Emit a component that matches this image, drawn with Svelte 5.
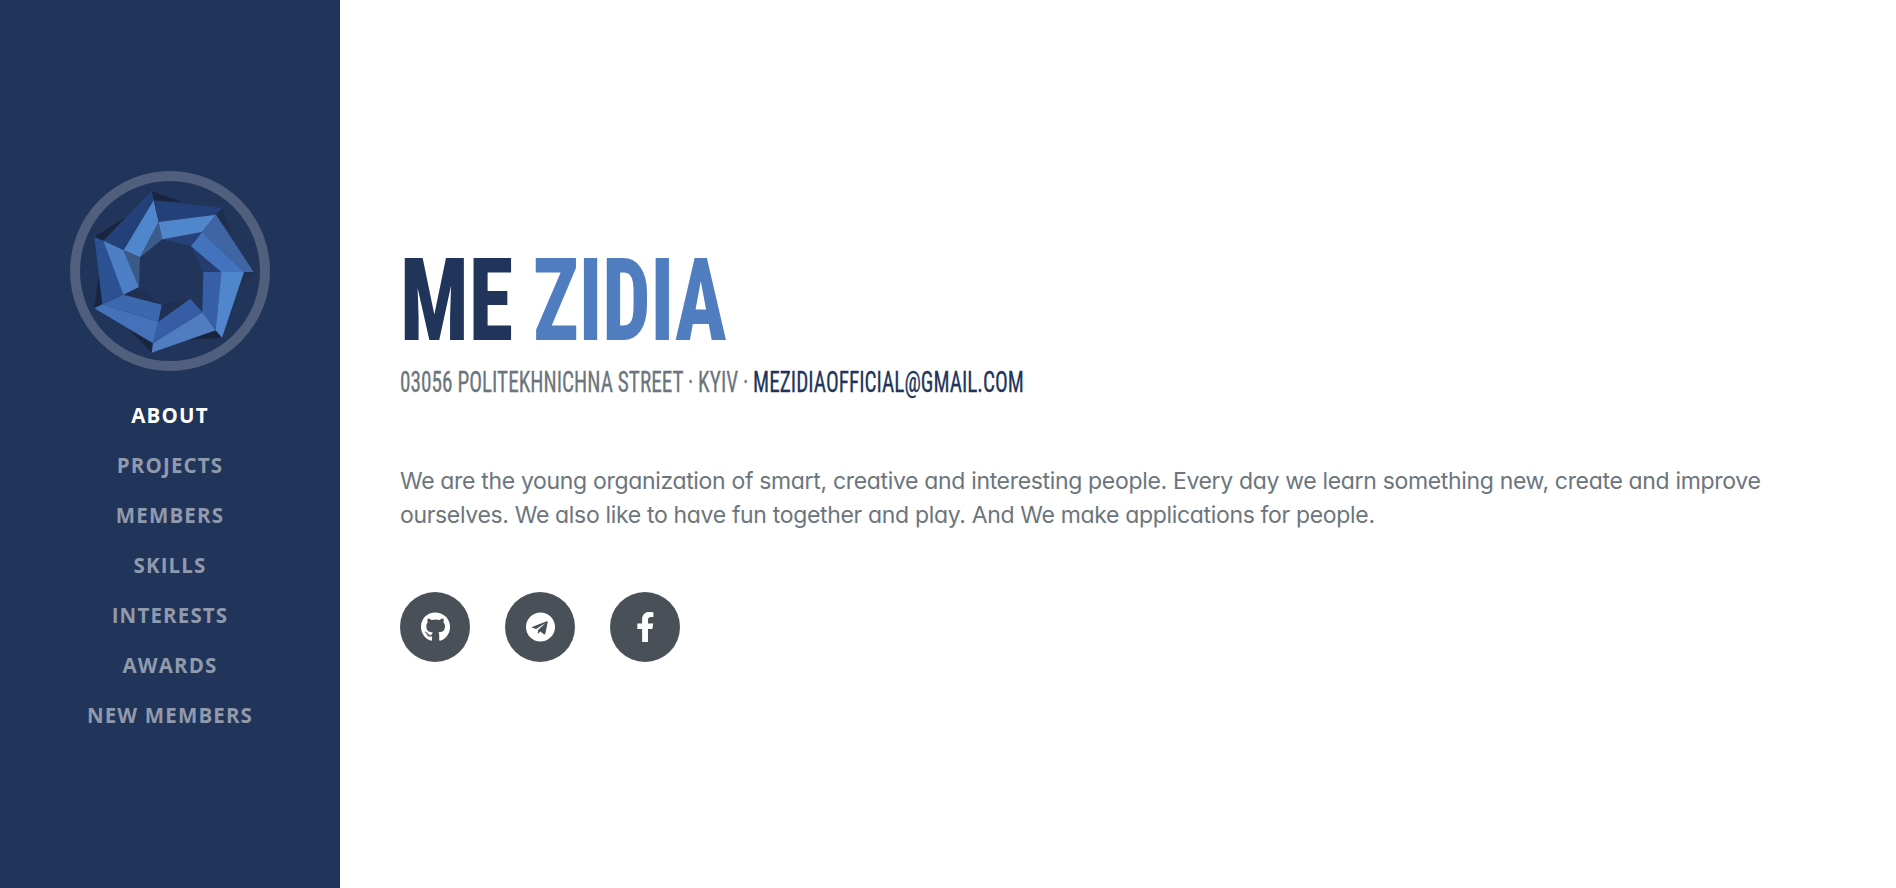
<script>
  const nav = ['About', 'Projects', 'Members', 'Skills', 'Interests', 'Awards', 'New Members'];
  const active = 'About';

  const facets = [
    // shadows
    ['#19253f', '275,93 365,126 281,123'],
    ['#1e2d4e', '487,143 515,222 468,164'],
    ['#19253f', '103,231 197,172 130,243'],
    ['#19253f', '116,345 103,445 129,433'],
    ['#19253f', '207,508 281,549 275,578'],
    ['#19253f', '486,533 373,541 467,510'],
    ['#203050', '552,336 581,336 538,385'],
    // inner shadows
    ['#27417a', '307,238 426,216 393,259'],
    ['#253c70', '393,259 484,336 430,336'],
    ['#212f52', '305,434 391,416 295,485'],
    ['#212f52', '190,404 237,381 305,434'],
    // ring segments
    ['#244079', '275,93 281,121 191,271 130,242'],
    ['#5086cc', '281,121 296,186 240,292 191,271'],
    ['#3c5d8c', '296,186 307,238 240,292'],
    ['#244079', '281,121 487,143 468,164 296,186'],
    ['#5086cc', '296,186 468,164 426,216 307,238'],
    ['#3f65a2', '468,164 581,336 552,336 426,216'],
    ['#4473bd', '426,216 552,336 484,336 393,259'],
    ['#375fa8', '430,336 484,336 467,511 427,457'],
    ['#5086cc', '484,336 552,336 486,533 467,511'],
    ['#365da5', '391,416 427,457 279,550 295,485'],
    ['#4f7dc0', '427,457 467,511 275,578 279,550'],
    ['#3c68b0', '190,404 305,434 295,485 127,433'],
    ['#4471ba', '127,433 295,485 279,550 103,445'],
    ['#2c5192', '103,231 130,242 190,404 127,433'],
    ['#4c7fc6', '130,242 191,271 237,381 190,404'],
    ['#3b5a88', '191,271 240,292 237,381']
  ];

  const social = [
    {
      name: 'GitHub',
      box: '0 0 496 512',
      d: 'M165.9 397.4c0 2-2.3 3.6-5.2 3.6-3.3.3-5.6-1.3-5.6-3.6 0-2 2.3-3.6 5.2-3.6 3-.3 5.6 1.3 5.6 3.6zm-31.1-4.5c-.7 2 1.3 4.3 4.3 4.9 2.6 1 5.6 0 6.2-2s-1.3-4.3-4.3-5.2c-2.6-.7-5.5.3-6.2 2.3zm44.2-1.7c-2.9.7-4.9 2.6-4.6 4.9.3 2 2.9 3.3 5.9 2.6 2.9-.7 4.9-2.6 4.6-4.6-.3-1.9-3-3.2-5.9-2.9zM244.8 8C106.1 8 0 113.3 0 252c0 110.9 69.8 205.8 169.5 239.2 12.8 2.3 17.3-5.6 17.3-12.1 0-6.2-.3-40.4-.3-61.4 0 0-70 15-84.7-29.8 0 0-11.4-29.1-27.8-36.6 0 0-22.9-15.7 1.6-15.4 0 0 24.9 2 38.6 25.8 21.9 38.6 58.6 27.5 72.9 20.9 2.3-16 8.8-27.1 16-33.7-55.9-6.2-112.3-14.3-112.3-110.5 0-27.5 7.6-41.3 23.6-58.9-2.6-6.5-11.1-33.3 2.6-67.9 20.9-6.5 69 27 69 27 20-5.6 41.5-8.5 62.8-8.5s42.8 2.9 62.8 8.5c0 0 48.1-33.6 69-27 13.7 34.7 5.2 61.4 2.6 67.9 16 17.7 25.8 31.5 25.8 58.9 0 96.5-58.9 104.2-114.8 110.5 9.2 7.9 17 22.9 17 46.4 0 33.7-.3 75.4-.3 83.6 0 6.5 4.6 14.4 17.3 12.1C428.2 457.8 496 362.9 496 252 496 113.3 383.5 8 244.8 8zM97.2 352.9c-1.3 1-1 3.3.7 5.2 1.6 1.6 3.9 2.3 5.2 1 1.3-1 1-3.3-.7-5.2-1.6-1.6-3.9-2.3-5.2-1zm-10.8-8.1c-.7 1.3.3 2.9 2.3 3.9 1.6 1 3.6.7 4.3-.7.7-1.3-.3-2.9-2.3-3.9-2-.6-3.6-.3-4.3.7zm32.4 35.6c-1.6 1.3-1 4.3 1.3 6.2 2.3 2.3 5.2 2.6 6.5 1 1.3-1.3.7-4.3-1.3-6.2-2.2-2.3-5.2-2.6-6.5-1zm-11.4-14.7c-1.6 1-1.6 3.6 0 5.9 1.6 2.3 4.3 3.3 5.6 2.3 1.6-1.3 1.6-3.9 0-6.2-1.4-2.3-4-3.3-5.6-2z'
    },
    {
      name: 'Telegram',
      box: '0 0 496 512',
      d: 'M248 8C111 8 0 119 0 256s111 248 248 248 248-111 248-248S385 8 248 8zm121.8 169.9l-40.7 191.8c-3 13.6-11.1 16.9-22.4 10.5l-62-45.7-29.9 28.8c-3.3 3.3-6.1 6.1-12.5 6.1l4.4-63.1 114.9-103.8c5-4.4-1.1-6.9-7.7-2.5l-142 89.4-61.2-19.1c-13.3-4.2-13.6-13.3 2.8-19.7l239.1-92.2c11.1-4 20.8 2.7 17.2 19.5z'
    },
    {
      name: 'Facebook',
      box: '0 0 320 512',
      d: 'M279.14 288l14.22-92.66h-88.91v-60.13c0-25.35 12.42-50.06 52.24-50.06h40.42V6.26S260.43 0 225.36 0c-73.22 0-121.08 44.38-121.08 124.72v70.62H22.89V288h81.39v224h100.17V288z'
    }
  ];
</script>

<div class="page">
  <aside>
    <svg class="avatar" viewBox="30 33 600 600" aria-hidden="true">
      {#each facets as [fill, points]}
        <polygon {points} {fill} />
      {/each}
      <circle cx="330" cy="333" r="285" fill="none" stroke="#505f7d" stroke-width="30" />
    </svg>
    <nav>
      {#each nav as item}
        <a href="#top" class:active={item === active}>{item}</a>
      {/each}
    </nav>
  </aside>

  <main>
    <h1><span class="first">Me</span><span class="last">Zidia</span></h1>
    <p class="contact">
      03056 Politekhnichna Street · Kyiv · <a href="#top">mezidiaofficial@gmail.com</a>
    </p>
    <p class="lead">
      We are the young organization of smart, creative and interesting people. Every day we learn something new,
      create and improve ourselves. We also like to have fun together and play. And We make applications for people.
    </p>
    <div class="social">
      {#each social as s}
        <a href="#top" aria-label={s.name}>
          <svg viewBox={s.box} height="30" fill="#fff"><path d={s.d} /></svg>
        </a>
      {/each}
    </div>
  </main>
</div>

<style>
  :global(body) {
    background: #fff;
  }
  .page {
    display: flex;
    height: 888px;
    overflow: hidden;
  }
  a {
    text-decoration: none;
  }
  aside {
    box-sizing: border-box;
    flex: 0 0 340px;
    display: flex;
    flex-direction: column;
    align-items: center;
    justify-content: center;
    padding-top: 24px;
    background: #21355a;
  }
  .avatar {
    width: 200px;
    height: 200px;
  }
  nav {
    display: flex;
    flex-direction: column;
    align-items: center;
    margin-top: 19px;
    margin-bottom: 1px;
  }
  nav a {
    font: 740 20.5px/50px 'Open Sans', sans-serif;
    letter-spacing: 1.15px;
    text-transform: uppercase;
    color: #909aac;
  }
  nav a.active {
    color: #fff;
  }
  main {
    box-sizing: border-box;
    flex: 1;
    padding: 241px 60px 0;
  }
  h1 {
    display: flex;
    margin: 0;
    font: 850 115px/120px Roboto, sans-serif;
    font-stretch: 75%;
    text-transform: uppercase;
    color: #21355a;
  }
  h1 span {
    transform-origin: 0 50%;
  }
  .first {
    width: 133px;
    box-sizing: border-box;
    transform: scaleX(0.788);
  }
  .last {
    color: #4f7dbf;
    transform: scaleX(0.746);
  }
  .contact {
    width: max-content;
    margin: 3px 0 0;
    font: 400 30px/36px Roboto, sans-serif;
    font-stretch: 75%;
    text-transform: uppercase;
    white-space: nowrap;
    color: #6c757d;
    -webkit-text-stroke: 0.3px;
    transform: scaleX(0.709);
    transform-origin: 0 50%;
  }
  .contact a {
    color: #21355a;
  }
  .lead {
    width: 1400px;
    margin: 64px 0 0;
    font: 400 23px/34px Inter, sans-serif;
    font-feature-settings: 'cv11';
    letter-spacing: -0.333px;
    color: #6c757d;
  }
  .social {
    display: flex;
    gap: 35px;
    margin-top: 60px;
  }
  .social a {
    box-sizing: border-box;
    display: flex;
    align-items: center;
    justify-content: center;
    width: 70px;
    height: 70px;
    padding-left: 1px;
    border-radius: 50%;
    background: #495057;
  }
</style>
